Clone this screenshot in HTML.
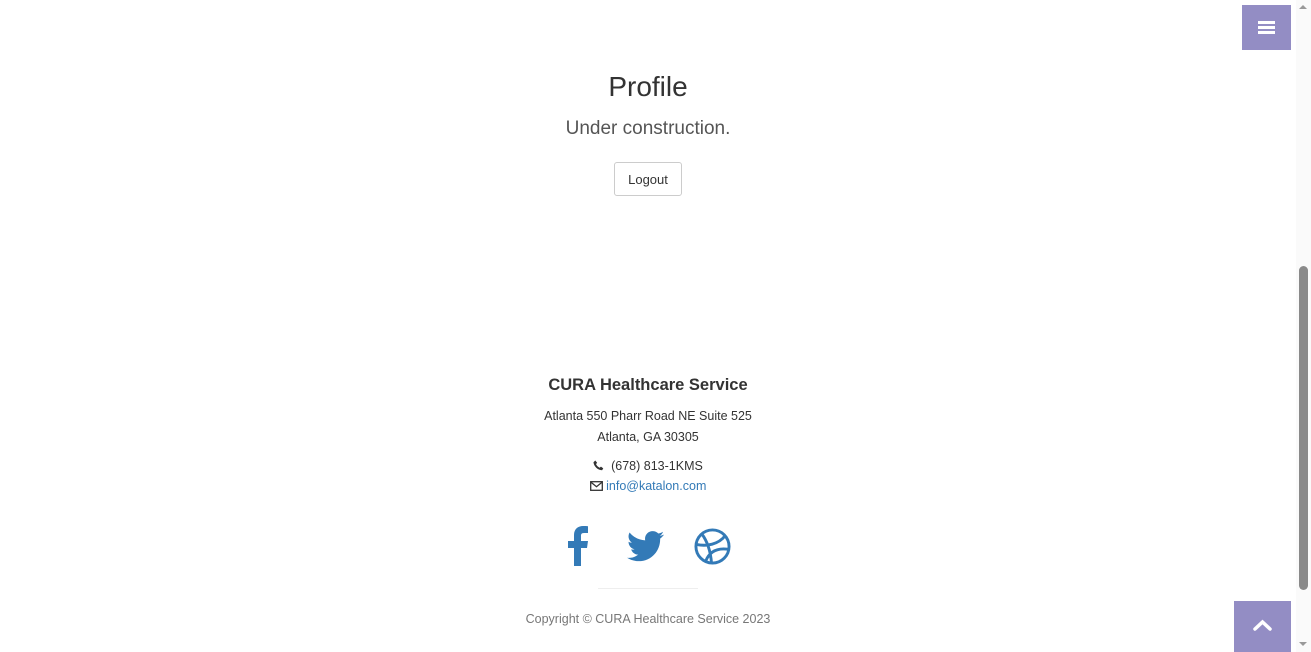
<!DOCTYPE html>
<html><head><meta charset="utf-8"><style>
*{margin:0;padding:0;box-sizing:border-box}
body{width:1311px;height:652px;overflow:hidden;background:#fff;font-family:"Liberation Sans",sans-serif;color:#333;position:relative}
.c{position:absolute;left:0;width:1296px;text-align:center}
.sb{position:absolute;left:1296px;top:0;width:15px;height:652px;background:#fafafa}
.thumb{position:absolute;left:1299px;top:266px;width:9px;height:324px;background:#8a8a8a;border-radius:5px}
.menu{position:absolute;left:1242px;top:5px;width:49px;height:45px;background:#938dc4}
.menu i{position:absolute;left:16px;width:17px;height:3px;background:#fff}
.top{position:absolute;left:1234px;top:601px;width:57px;height:51px;background:#938dc4}
</style></head><body>
<div class="c" style="top:71px;font-size:28px;color:#333">Profile</div>
<div class="c" style="top:118px;font-size:19px;color:#555">Under construction.</div>
<div style="position:absolute;left:614px;top:162px;width:68px;height:34px;border:1px solid #ccc;border-radius:3px;font-size:13px;text-align:center;line-height:33px;color:#333">Logout</div>
<div class="c" style="top:376px;font-size:16.5px;font-weight:bold">CURA Healthcare Service</div>
<div class="c" style="top:406px;font-size:12.5px;line-height:21px">Atlanta 550 Pharr Road NE Suite 525<br>Atlanta, GA 30305</div>
<div class="c" style="top:456px;font-size:12.5px;line-height:20px"><svg width="11" height="11" viewBox="0 0 12 12" style="vertical-align:-1px"><path d="M2.5 0.5l2 2.5-1.2 1.5c.8 1.7 2.2 3.1 3.9 3.9l1.5-1.2 2.5 2-1.3 2C5 11 1 7 .5 2.5z" fill="#333"/></svg>&nbsp; (678) 813-1KMS<br><span style="color:#337ab7"><svg width="13" height="10" viewBox="0 0 13 10" style="vertical-align:-1px"><rect x=".7" y=".7" width="11.6" height="8.6" fill="none" stroke="#333" stroke-width="1.3"/><path d="M1 1.2l5.5 4.5 5.5-4.5" fill="none" stroke="#333" stroke-width="1.3"/></svg> info@katalon.com</span></div>
<svg style="position:absolute;left:567px;top:526px" width="24" height="40" viewBox="0 0 24 40"><path d="M7 40V22H1v-7h6V9c0-6 4-9 9-9 2 0 4 0 5 .3V7h-4c-3 0-3 1.5-3 3.5V15h7l-1 7h-6v18z" fill="#337ab7"/></svg>
<svg style="position:absolute;left:627px;top:531px" width="37" height="31" viewBox="0 0 24 20"><path d="M24 2.3c-.9.4-1.800.7-2.8.8 1-.6 1.8-1.6 2.2-2.700-1 .6-2 1-3.1 1.2C19.4.6 18.1 0 16.6 0c-2.7 0-4.9 2.2-4.9 4.9 0 .4 0 .8.1 1.1C7.7 5.8 4.1 3.9 1.7.9c-.4.7-.7 1.6-.7 2.5 0 1.7.9 3.2 2.2 4.1-.8 0-1.6-.2-2.2-.6v.1c0 2.4 1.7 4.4 3.9 4.8-.4.1-.8.2-1.300.2-.3 0-.6 0-.9-.1.6 2 2.4 3.4 4.6 3.4-1.7 1.3-3.8 2.1-6.1 2.1-.4 0-.8 0-1.200-.1 2.2 1.4 4.8 2.2 7.5 2.2 9.1 0 14-7.5 14-14v-.6c1-.7 1.8-1.6 2.5-2.5z" fill="#337ab7"/></svg>
<svg style="position:absolute;left:694px;top:528px" width="37" height="37" viewBox="0 0 38 38" fill="none" stroke="#337ab7" stroke-width="3"><circle cx="19" cy="19" r="17"/><path d="M8 6c6 8 9 18 10 30M3 17c10 2 22 0 29-9M12 34c4-10 12-14 24-12"/></svg>
<div style="position:absolute;left:598px;top:588px;width:100px;height:1px;background:#eee"></div>
<div class="c" style="top:612px;font-size:12.5px;color:#777">Copyright © CURA Healthcare Service 2023</div>
<div class="menu"><i style="top:16px"></i><i style="top:21px"></i><i style="top:26px"></i></div>
<div class="top"><svg style="position:absolute;left:19px;top:18px" width="19" height="13" viewBox="0 0 19 13"><path d="M2 10l7.5-7 7.5 7" stroke="#fff" stroke-width="3.5" fill="none" stroke-linecap="round"/></svg></div>
<div class="sb"></div><div class="thumb"></div>
<div style="position:absolute;left:1299px;top:5px;border:4px solid transparent;border-bottom:4px solid #999;border-top:0"></div>
<div style="position:absolute;left:1299px;top:642px;border:4px solid transparent;border-top:4px solid #999;border-bottom:0"></div>
</body></html>
